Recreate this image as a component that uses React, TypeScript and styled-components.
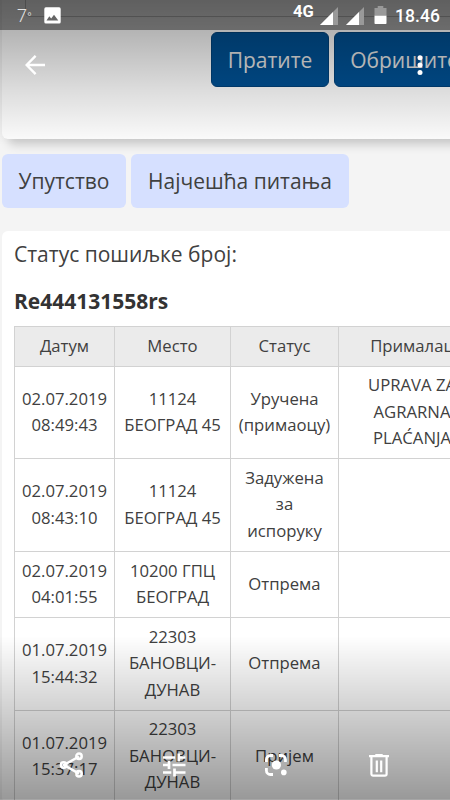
import React from 'react';
import styled, {createGlobalStyle} from "styled-components";

type Shipment = {
    date: string
    place: string[]
    status: string[]
    recipient?: string[]
    height: number
}

const shipments: Shipment[] = [
    {date: "02.07.2019 08:49:43", place: ["11124", "БЕОГРАД 45"], status: ["Уручена", "(примаоцу)"], recipient: ["UPRAVA ZA", "AGRARNA", "PLAĆANJA"], height: 92},
    {date: "02.07.2019 08:43:10", place: ["11124", "БЕОГРАД 45"], status: ["Задужена", "за", "испоруку"], height: 93},
    {date: "02.07.2019 04:01:55", place: ["10200 ГПЦ", "БЕОГРАД"], status: ["Отпрема"], height: 66},
    {date: "01.07.2019 15:44:32", place: ["22303", "БАНОВЦИ-", "ДУНАВ"], status: ["Отпрема"], height: 93},
    {date: "01.07.2019 15:37:17", place: ["22303", "БАНОВЦИ-", "ДУНАВ"], status: ["Пријем"], height: 92},
];

const Lines: React.FC<{ items: string[] }> = ({items}) => (
    <>{items.map((item, i) => <Line key={i}>{item}</Line>)}</>
)

const App: React.FC = () => {
    return (
        <Screen>
            <GlobalStyle/>
            <SearchCard>
                <SearchField/>
                <SearchButtons>
                    <PrimaryButton width={118}>Пратите</PrimaryButton>
                    <PrimaryButton width={141}>Обришите</PrimaryButton>
                </SearchButtons>
            </SearchCard>
            <HelpButtons>
                <HelpButton width={124}>Упутство</HelpButton>
                <HelpButton width={218}>Најчешћа питања</HelpButton>
            </HelpButtons>
            <ResultCard>
                <ResultTitle>Статус пошиљке број:</ResultTitle>
                <ResultNumber>Re444131558rs</ResultNumber>
                <Table>
                    <colgroup>
                        <Col width={100}/>
                        <Col width={116}/>
                        <Col width={108}/>
                        <Col width={147}/>
                    </colgroup>
                    <thead>
                    <Row height={40}>
                        <HeadCell>Датум</HeadCell>
                        <HeadCell>Место</HeadCell>
                        <HeadCell>Статус</HeadCell>
                        <HeadCell>Прималац</HeadCell>
                    </Row>
                    </thead>
                    <tbody>
                    {shipments.map((s) => (
                        <Row key={s.date} height={s.height}>
                            <Cell><Lines items={s.date.split(" ")}/></Cell>
                            <Cell><Lines items={s.place}/></Cell>
                            <Cell><Lines items={s.status}/></Cell>
                            <Cell><Lines items={s.recipient ?? []}/></Cell>
                        </Row>
                    ))}
                    </tbody>
                </Table>
            </ResultCard>

            <TopOverlay>
                <StatusBar>
                    <Temperature>7<Degree>°</Degree></Temperature>
                    <svg width="17" height="17" viewBox="0 0 17 17">
                        <rect x="0.3" y="0.3" width="16.4" height="16.2" rx="1.6" fill="#fff"/>
                        <path d="M2.5 13.5 5.3 9.3 7.2 11.4 10 7.8 14.3 13.5z" fill="#666"/>
                    </svg>
                    <Network>4G</Network>
                    <Signal/>
                    <Signal/>
                    <svg width="13" height="19" viewBox="0 0 13 19">
                        <path d="M0.5 2H3.7V0H9.3V2H12.5V10H0.5z" fill="#999"/>
                        <path d="M0.5 9.7H12.5V17.2a0.8 0.8 0 0 1-0.8 0.8H1.3a0.8 0.8 0 0 1-0.8-0.8z" fill="#fff"/>
                    </svg>
                    <Clock>18.46</Clock>
                </StatusBar>
                <Toolbar>
                    <svg width="20" height="20" viewBox="0 0 20 20" fill="none" stroke="#fff" strokeWidth="2.4">
                        <path d="M20 10H2M10.6 0.9 1.6 10l9 9.1"/>
                    </svg>
                    <svg width="6" height="20" viewBox="0 0 6 20" fill="#fff">
                        <circle cx="3" cy="2.7" r="2.5"/>
                        <circle cx="3" cy="10" r="2.5"/>
                        <circle cx="3" cy="17.4" r="2.5"/>
                    </svg>
                </Toolbar>
            </TopOverlay>

            <BottomOverlay>
                <Action>
                    <svg width="24" height="26" viewBox="0 0 24 26" fill="none" stroke="#fff" strokeWidth="2.5">
                        <path d="M20 4.5 5 13 20 21.6"/>
                        <circle cx="20" cy="4.3" r="2.7"/>
                        <circle cx="4.6" cy="13" r="2.7"/>
                        <circle cx="20" cy="21.7" r="2.7"/>
                    </svg>
                </Action>
                <Action>
                    <svg width="24" height="24" viewBox="0 0 24 24" fill="none" stroke="#fff" strokeWidth="2.7">
                        <path d="M1 4.5H13M16.8 4.5H23.5M16.8 0.5V8.5M1 12H7M7 8V16M10.5 12H23.5M1 19.5H9.3M12.5 15.5V23.5M12.5 19.5H23.5"/>
                    </svg>
                </Action>
                <Action>
                    <svg width="24" height="24" viewBox="0 0 24 24" fill="none" stroke="#fff" strokeWidth="2.8">
                        <path d="M2.4 9V6.5a4 4 0 0 1 4-4H9M15 2.5h2.5a4 4 0 0 1 4 4V9M2.4 15v2.5a4 4 0 0 0 4 4H9"/>
                        <circle cx="12.4" cy="12" r="4.6" fill="#fff" stroke="none"/>
                        <circle cx="19.8" cy="19.4" r="2.8" fill="#fff" stroke="none"/>
                    </svg>
                </Action>
                <Action>
                    <svg width="20" height="23" viewBox="0 0 20 23" fill="none" stroke="#fff" strokeWidth="2.2">
                        <path d="M0 2.2H20M6.3 1.1H13.7M2.4 3V20a1.7 1.7 0 0 0 1.7 1.7H15.9A1.7 1.7 0 0 0 17.6 20V3"/>
                        <path d="M7.8 6.5V18.2M12.2 6.5V18.2"/>
                    </svg>
                </Action>
            </BottomOverlay>
        </Screen>
    )
}

export default App;

const Signal: React.FC = () => (
    <svg width="18" height="18" viewBox="0 0 18 18">
        <path d="M18 0V18H0z" fill="#999"/>
        <path d="M13 5V18H0z" fill="#fff"/>
    </svg>
)

const GlobalStyle = createGlobalStyle`
  * {
    box-sizing: border-box;
  }

  body {
    margin: 0;
    overflow: hidden;
  }

  svg {
    display: block;
    flex-shrink: 0;
  }
`

const Screen = styled.div`
  position: relative;
  width: 450px;
  height: 800px;
  overflow: hidden;
  background-color: #f4f4f4;
  color: #404040;
  font-family: "Open Sans", "Noto Sans", sans-serif;
`

const SearchCard = styled.section`
  width: 500px;
  height: 139px;
  margin-left: 2px;
  background-color: #fdfdfd;
  border-radius: 0 0 6px 6px;
  box-shadow: 6px 6px 10px rgba(0, 0, 0, 0.17);
`

const SearchField = styled.div`
  height: 17px;
  margin-left: 23px;
  border: solid #c8c8c8;
  border-width: 0 0 1px 1px;
  border-radius: 0 0 0 5px;
`

const SearchButtons = styled.div`
  display: flex;
  gap: 5px;
  padding: 15px 0 0 209px;
`

const Button = styled.button<{ width: number }>`
  flex: none;
  width: ${({width}) => width}px;
  height: 54px;
  padding: 0;
  border: none;
  border-radius: 6px;
  font-family: inherit;
  font-size: 21px;
  line-height: 54px;
  white-space: nowrap;
`

const PrimaryButton = styled(Button)`
  height: 55px;
  background-color: #005093;
  border: 1px solid #00417a;
  color: #e4e4e4;
  line-height: 52px;
`

const HelpButtons = styled.div`
  display: flex;
  gap: 5px;
  padding: 15px 0 0 2px;
`

const HelpButton = styled(Button)`
  background-color: #d6e0ff;
  color: #404040;
`

const ResultCard = styled.section`
  width: 500px;
  margin: 23px 0 0 2px;
  padding-left: 12px;
  background-color: #fff;
  border-radius: 6px;
`

const ResultTitle = styled.p`
  margin: 0;
  padding-top: 7px;
  font-size: 21px;
  line-height: 32px;
`

const ResultNumber = styled.h2`
  margin: 15px 0 9px;
  color: #333;
  font-size: 21px;
  font-weight: 700;
  line-height: 32px;
`

const Table = styled.table`
  width: 472px;
  table-layout: fixed;
  border-collapse: collapse;
  font-size: 16.7px;
  line-height: 26.4px;
  text-align: center;
`

const Col = styled.col<{ width: number }>`
  width: ${({width}) => width}px;
`

const Row = styled.tr<{ height: number }>`
  height: ${({height}) => height}px;
`

const Cell = styled.td`
  padding: 0 0 1px;
  border: 1px solid #d2d2d2;
  vertical-align: middle;
`

const HeadCell = styled.th`
  padding: 0;
  background-color: #ebebeb;
  border: 1px solid #d2d2d2;
  font-weight: 400;
`

const Line = styled.span`
  display: block;
  white-space: nowrap;
`

const TopOverlay = styled.header`
  position: absolute;
  top: 0;
  left: 0;
  width: 100%;
  height: 145px;
  background: linear-gradient(rgba(0, 0, 0, 0.37), rgba(0, 0, 0, 0.29) 30px, rgba(0, 0, 0, 0.13) 90px, rgba(0, 0, 0, 0));
`

const StatusBar = styled.div`
  display: flex;
  align-items: flex-start;
  height: 30px;
  padding: 7px 0 0 17px;
  background-color: rgba(0, 0, 0, 0.4);
  color: #fff;
  font-family: Roboto, sans-serif;
`

const Temperature = styled.span`
  width: 27px;
  color: #e4e4e4;
  font-size: 18px;
  font-weight: 300;
  line-height: 18px;
`

const Degree = styled.span`
  font-size: 13px;
`

const Network = styled.span`
  width: 27px;
  margin-left: 232px;
  margin-top: -4px;
  font-size: 16.5px;
  font-weight: 700;
  line-height: 17px;

  & ~ svg {
    margin-right: 8px;
  }

  & + svg + svg {
    margin-right: 10px;
  }

  & + svg + svg + svg {
    margin-top: -1px;
  }
`

const Clock = styled.span`
  font-size: 17.5px;
  font-weight: 500;
  line-height: 18px;
  letter-spacing: 0.1px;
`

const Toolbar = styled.div`
  display: flex;
  justify-content: space-between;
  padding: 25px 27px 0 25px;
`

const BottomOverlay = styled.footer`
  position: absolute;
  bottom: 0;
  left: 0;
  display: flex;
  width: 100%;
  height: 164px;
  padding: 94px 20px 0;
  border-bottom: 1px solid rgba(0, 0, 0, 0.35);
  background: linear-gradient(rgba(0, 0, 0, 0), rgba(0, 0, 0, 0.4));
`

const Action = styled.div`
  display: flex;
  flex: none;
  align-items: center;
  justify-content: center;
  width: 102.5px;
  height: 70px;
`
